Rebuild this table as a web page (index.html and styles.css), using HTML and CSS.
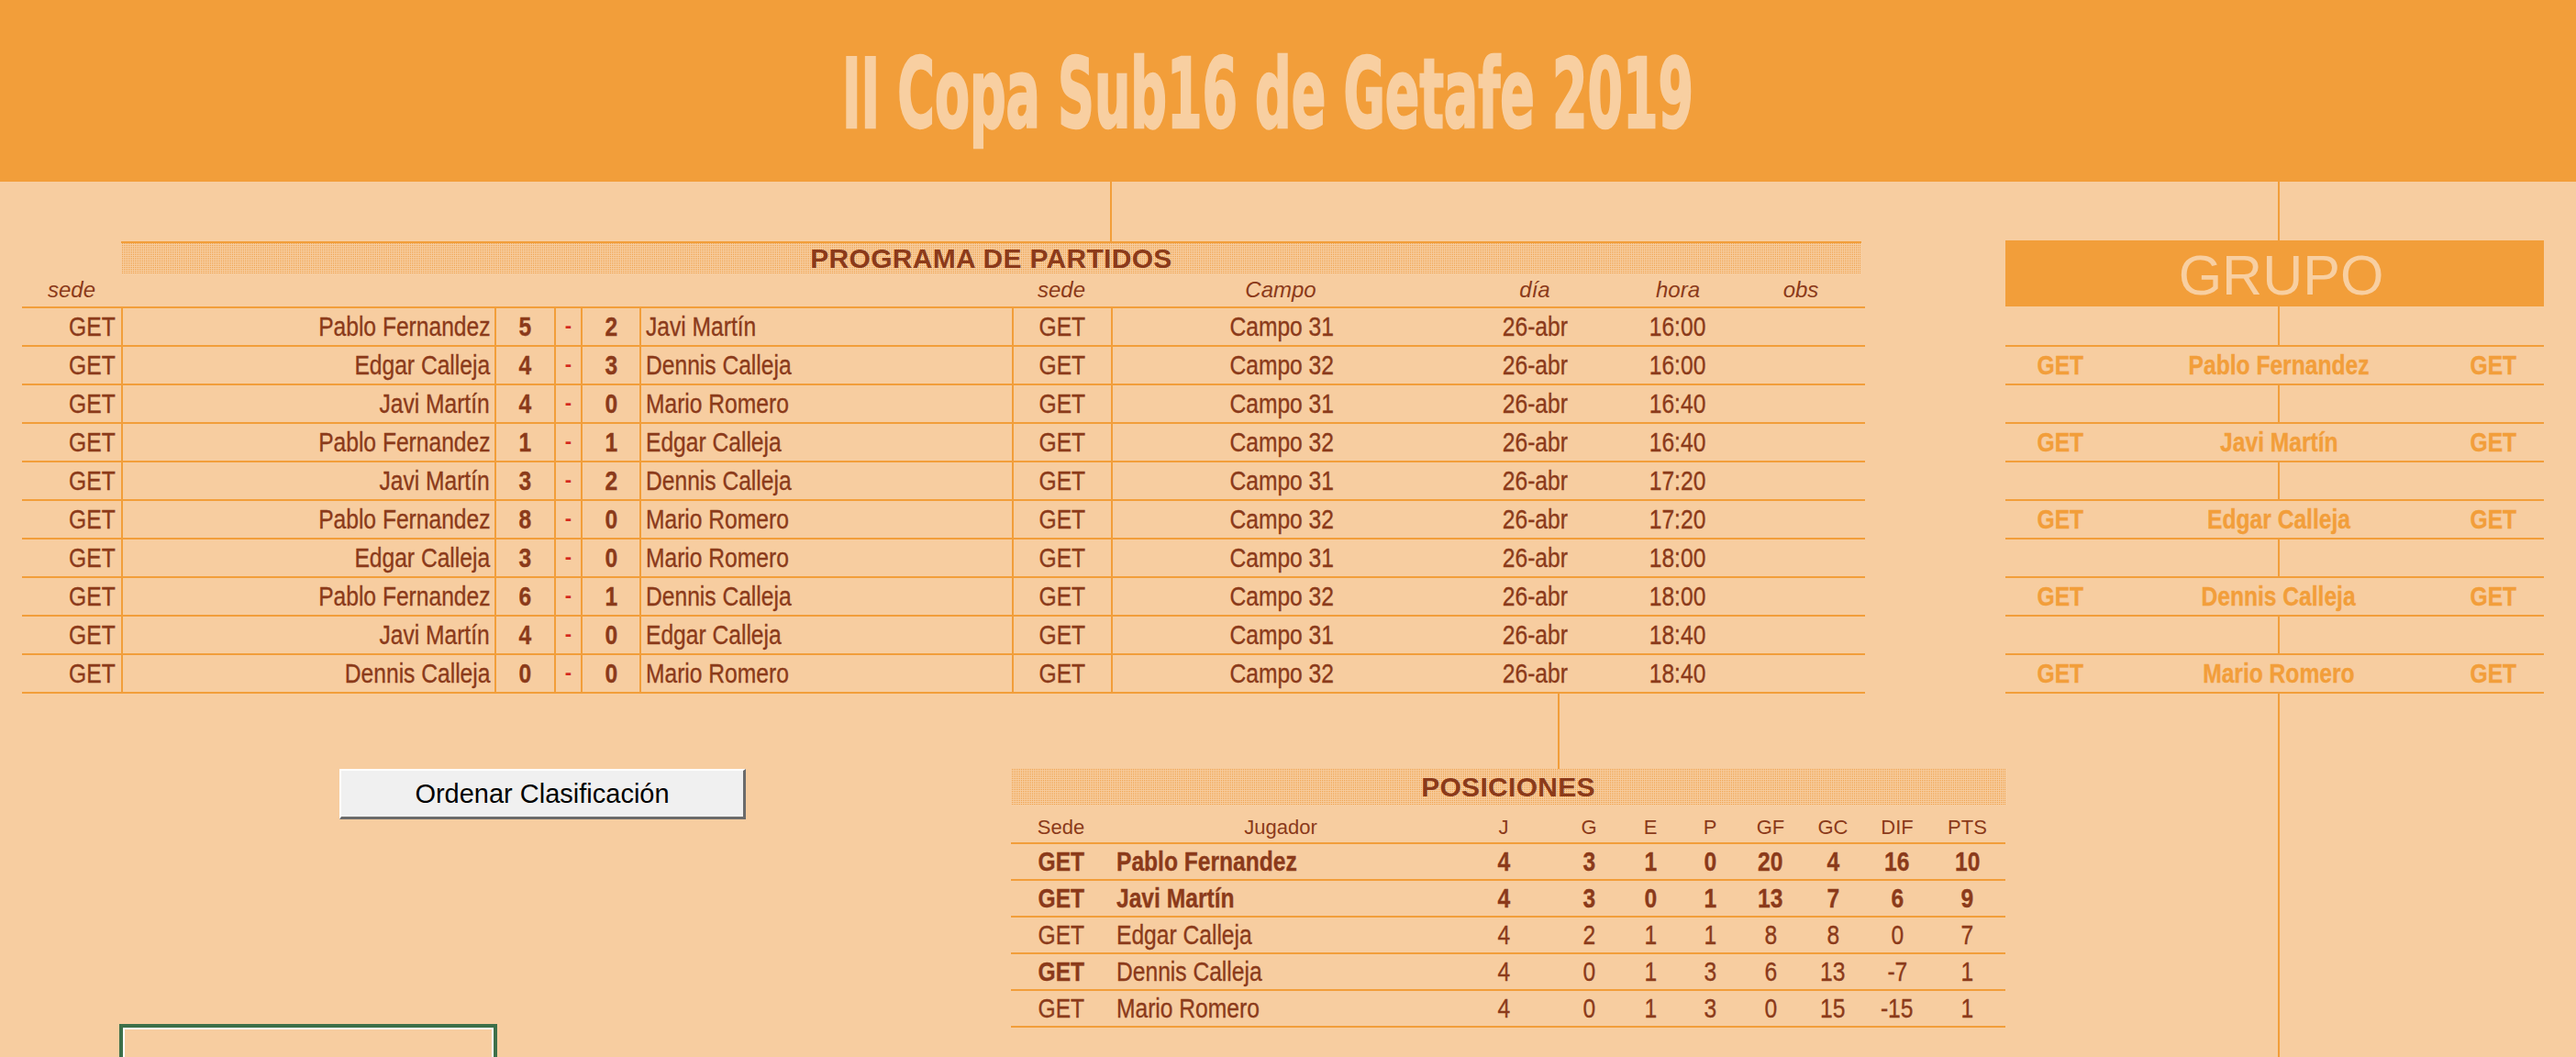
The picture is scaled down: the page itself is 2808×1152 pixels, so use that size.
FILE: index.html
```html
<!DOCTYPE html>
<html lang="es">
<head>
<meta charset="utf-8">
<title>II Copa Sub16 de Getafe 2019</title>
<link rel="stylesheet" href="styles.css">
</head>
<body>
<header class="banner">
  <h1 class="title"><span class="title-text">II Copa Sub16 de Getafe 2019</span></h1>
</header>
<main class="sheet">
  <div class="left">
    <div class="gap-top"><div class="vline vline-campo"></div></div>
    <section class="programa">
      <div class="bar bar-programa">PROGRAMA DE PARTIDOS</div>
      <div class="prog">
        <div class="prow prow-head">
          <span class="c">sede</span><span></span><span></span><span></span><span></span><span></span><span class="c">sede</span><span class="c">Campo</span><span class="c">día</span><span class="c">hora</span><span class="c">obs</span>
        </div>
        <div class="prow prow-body">
          <span class="sede"><span class="n">GET</span></span><span class="home"><span class="n">Pablo Fernandez</span></span><span class="score"><span class="n">5</span></span><span class="dash">-</span><span class="score"><span class="n">2</span></span><span class="away"><span class="n">Javi Martín</span></span><span class="c"><span class="n">GET</span></span><span class="c"><span class="n">Campo 31</span></span><span class="c"><span class="n">26-abr</span></span><span class="c"><span class="n">16:00</span></span><span class="c"></span>
        </div>
        <div class="prow prow-body">
          <span class="sede"><span class="n">GET</span></span><span class="home"><span class="n">Edgar Calleja</span></span><span class="score"><span class="n">4</span></span><span class="dash">-</span><span class="score"><span class="n">3</span></span><span class="away"><span class="n">Dennis Calleja</span></span><span class="c"><span class="n">GET</span></span><span class="c"><span class="n">Campo 32</span></span><span class="c"><span class="n">26-abr</span></span><span class="c"><span class="n">16:00</span></span><span class="c"></span>
        </div>
        <div class="prow prow-body">
          <span class="sede"><span class="n">GET</span></span><span class="home"><span class="n">Javi Martín</span></span><span class="score"><span class="n">4</span></span><span class="dash">-</span><span class="score"><span class="n">0</span></span><span class="away"><span class="n">Mario Romero</span></span><span class="c"><span class="n">GET</span></span><span class="c"><span class="n">Campo 31</span></span><span class="c"><span class="n">26-abr</span></span><span class="c"><span class="n">16:40</span></span><span class="c"></span>
        </div>
        <div class="prow prow-body">
          <span class="sede"><span class="n">GET</span></span><span class="home"><span class="n">Pablo Fernandez</span></span><span class="score"><span class="n">1</span></span><span class="dash">-</span><span class="score"><span class="n">1</span></span><span class="away"><span class="n">Edgar Calleja</span></span><span class="c"><span class="n">GET</span></span><span class="c"><span class="n">Campo 32</span></span><span class="c"><span class="n">26-abr</span></span><span class="c"><span class="n">16:40</span></span><span class="c"></span>
        </div>
        <div class="prow prow-body">
          <span class="sede"><span class="n">GET</span></span><span class="home"><span class="n">Javi Martín</span></span><span class="score"><span class="n">3</span></span><span class="dash">-</span><span class="score"><span class="n">2</span></span><span class="away"><span class="n">Dennis Calleja</span></span><span class="c"><span class="n">GET</span></span><span class="c"><span class="n">Campo 31</span></span><span class="c"><span class="n">26-abr</span></span><span class="c"><span class="n">17:20</span></span><span class="c"></span>
        </div>
        <div class="prow prow-body">
          <span class="sede"><span class="n">GET</span></span><span class="home"><span class="n">Pablo Fernandez</span></span><span class="score"><span class="n">8</span></span><span class="dash">-</span><span class="score"><span class="n">0</span></span><span class="away"><span class="n">Mario Romero</span></span><span class="c"><span class="n">GET</span></span><span class="c"><span class="n">Campo 32</span></span><span class="c"><span class="n">26-abr</span></span><span class="c"><span class="n">17:20</span></span><span class="c"></span>
        </div>
        <div class="prow prow-body">
          <span class="sede"><span class="n">GET</span></span><span class="home"><span class="n">Edgar Calleja</span></span><span class="score"><span class="n">3</span></span><span class="dash">-</span><span class="score"><span class="n">0</span></span><span class="away"><span class="n">Mario Romero</span></span><span class="c"><span class="n">GET</span></span><span class="c"><span class="n">Campo 31</span></span><span class="c"><span class="n">26-abr</span></span><span class="c"><span class="n">18:00</span></span><span class="c"></span>
        </div>
        <div class="prow prow-body">
          <span class="sede"><span class="n">GET</span></span><span class="home"><span class="n">Pablo Fernandez</span></span><span class="score"><span class="n">6</span></span><span class="dash">-</span><span class="score"><span class="n">1</span></span><span class="away"><span class="n">Dennis Calleja</span></span><span class="c"><span class="n">GET</span></span><span class="c"><span class="n">Campo 32</span></span><span class="c"><span class="n">26-abr</span></span><span class="c"><span class="n">18:00</span></span><span class="c"></span>
        </div>
        <div class="prow prow-body">
          <span class="sede"><span class="n">GET</span></span><span class="home"><span class="n">Javi Martín</span></span><span class="score"><span class="n">4</span></span><span class="dash">-</span><span class="score"><span class="n">0</span></span><span class="away"><span class="n">Edgar Calleja</span></span><span class="c"><span class="n">GET</span></span><span class="c"><span class="n">Campo 31</span></span><span class="c"><span class="n">26-abr</span></span><span class="c"><span class="n">18:40</span></span><span class="c"></span>
        </div>
        <div class="prow prow-body">
          <span class="sede"><span class="n">GET</span></span><span class="home"><span class="n">Dennis Calleja</span></span><span class="score"><span class="n">0</span></span><span class="dash">-</span><span class="score"><span class="n">0</span></span><span class="away"><span class="n">Mario Romero</span></span><span class="c"><span class="n">GET</span></span><span class="c"><span class="n">Campo 32</span></span><span class="c"><span class="n">26-abr</span></span><span class="c"><span class="n">18:40</span></span><span class="c"></span>
        </div>
      </div>
    </section>
    <div class="lower">
      <div class="lower-left">
        <button class="btn" type="button">Ordenar Clasificación</button>
        <div class="selbox"></div>
      </div>
      <section class="lower-right">
        <div class="gap-mid"><div class="vline vline-j"></div></div>
        <div class="bar bar-pos">POSICIONES</div>
        <div class="pos">
          <div class="qrow qrow-head">
            <span>Sede</span><span>Jugador</span><span>J</span><span>G</span><span>E</span><span>P</span><span>GF</span><span>GC</span><span>DIF</span><span>PTS</span>
          </div>
          <div class="qrow qrow-bold">
            <span class="b"><span class="n">GET</span></span><span class="name"><span class="n">Pablo Fernandez</span></span><span><span class="n">4</span></span><span><span class="n">3</span></span><span><span class="n">1</span></span><span><span class="n">0</span></span><span><span class="n">20</span></span><span><span class="n">4</span></span><span><span class="n">16</span></span><span><span class="n">10</span></span>
          </div>
          <div class="qrow qrow-bold">
            <span class="b"><span class="n">GET</span></span><span class="name"><span class="n">Javi Martín</span></span><span><span class="n">4</span></span><span><span class="n">3</span></span><span><span class="n">0</span></span><span><span class="n">1</span></span><span><span class="n">13</span></span><span><span class="n">7</span></span><span><span class="n">6</span></span><span><span class="n">9</span></span>
          </div>
          <div class="qrow">
            <span><span class="n">GET</span></span><span class="name"><span class="n">Edgar Calleja</span></span><span><span class="n">4</span></span><span><span class="n">2</span></span><span><span class="n">1</span></span><span><span class="n">1</span></span><span><span class="n">8</span></span><span><span class="n">8</span></span><span><span class="n">0</span></span><span><span class="n">7</span></span>
          </div>
          <div class="qrow">
            <span class="b"><span class="n">GET</span></span><span class="name"><span class="n">Dennis Calleja</span></span><span><span class="n">4</span></span><span><span class="n">0</span></span><span><span class="n">1</span></span><span><span class="n">3</span></span><span><span class="n">6</span></span><span><span class="n">13</span></span><span><span class="n">-7</span></span><span><span class="n">1</span></span>
          </div>
          <div class="qrow">
            <span><span class="n">GET</span></span><span class="name"><span class="n">Mario Romero</span></span><span><span class="n">4</span></span><span><span class="n">0</span></span><span><span class="n">1</span></span><span><span class="n">3</span></span><span><span class="n">0</span></span><span><span class="n">15</span></span><span><span class="n">-15</span></span><span><span class="n">1</span></span>
          </div>
        </div>
      </section>
    </div>
  </div>
  <aside class="right">
    <div class="gap-top-r"><div class="vline vline-grupo"></div></div>
    <div class="grupo">GRUPO</div>
    <div class="gblank gblank-first"><span></span><span></span></div>
    <div class="grow"><span><span class="n">GET</span></span><span><span class="n">Pablo Fernandez</span></span><span><span class="n">GET</span></span></div>
    <div class="gblank"><span></span><span></span></div>
    <div class="grow"><span><span class="n">GET</span></span><span><span class="n">Javi Martín</span></span><span><span class="n">GET</span></span></div>
    <div class="gblank"><span></span><span></span></div>
    <div class="grow"><span><span class="n">GET</span></span><span><span class="n">Edgar Calleja</span></span><span><span class="n">GET</span></span></div>
    <div class="gblank"><span></span><span></span></div>
    <div class="grow"><span><span class="n">GET</span></span><span><span class="n">Dennis Calleja</span></span><span><span class="n">GET</span></span></div>
    <div class="gblank"><span></span><span></span></div>
    <div class="grow"><span><span class="n">GET</span></span><span><span class="n">Mario Romero</span></span><span><span class="n">GET</span></span></div>
    <div class="gfill"><div class="vline vline-grupo"></div></div>
  </aside>
</main>
</body>
</html>
```

FILE: styles.css
```css
* { box-sizing: border-box; margin: 0; padding: 0; }
html, body { width: 2808px; height: 1152px; overflow: hidden; }
body {
  background: #F7CDA0;
  font-family: "Liberation Sans", Arial, sans-serif;
  color: #8B3A1A;
}

/* header */
.banner {
  height: 198px;
  background: #F29E3A;
  display: flex;
  justify-content: center;
  padding-top: 50px;
  padding-right: 45px;
}
.title {
  font-family: "DejaVu Sans Condensed", "DejaVu Sans", sans-serif;
  font-weight: 700;
  font-size: 106px;
  line-height: 106px;
  color: #F8CFA1;
  white-space: nowrap;
}
.title-text {
  display: inline-block;
  transform: scaleX(.58);
  -webkit-text-stroke: 2.5px #F8CFA1;
}

/* sheet */
.sheet { display: flex; height: 954px; overflow: hidden; }
.left { width: 2186px; display: flex; flex-direction: column; flex-shrink: 0; }
.left > *, .right > *, .lower-left > *, .lower-right > * { flex-shrink: 0; }
.gap-top { height: 65px; }
.vline { height: 100%; border-left: 2px solid #F29E3A; }
.vline-campo { margin-left: 1210px; }

.bar {
  background-color: #F7CDA0;
  background-image: repeating-conic-gradient(#EE9E45 0 25%, transparent 0 100%);
  background-size: 2px 2px;
  font-weight: 700;
  font-size: 30px;
  letter-spacing: .3px;
  text-align: center;
  color: #8B3A1A;
}
.bar-programa {
  margin-left: 132px;
  width: 1897px;
  height: 35px;
  border-top: 2px solid #F29E3A;
  line-height: 33px;
}

/* narrow (Arial Narrow-like) data text */
.n {
  display: inline-block;
  transform: scaleX(.82);
  -webkit-text-stroke: .35px currentColor;
}
.sede .n, .home .n { transform-origin: right center; }
.away .n, .name .n { transform-origin: left center; }

/* programa */
.prog { margin-left: 24px; width: 2009px; }
.prow {
  display: grid;
  grid-template-columns: 108px 407px 65px 29px 64px 406px 108px 370px 184px 128px 140px;
  height: 42px;
  border-bottom: 2px solid #F29E3A;
  font-size: 30px;
  line-height: 40px;
  white-space: nowrap;
}
.prow-head { height: 38px; font-size: 24px; font-style: italic; line-height: 36px; }
.prow-body > span:nth-child(n+2):nth-child(-n+8) { border-left: 2px solid #F29E3A; }
.c { text-align: center; }
.sede { text-align: right; padding-right: 6px; }
.home { text-align: right; padding-right: 5px; }
.away { text-align: left; padding-left: 5px; }
.score { text-align: center; font-weight: 700; }
.dash { text-align: center; font-weight: 700; font-size: 22px; line-height: 38px; color: #D42A1E; }

/* lower part */
.lower { display: flex; flex: 1 0 auto; }
.lower-left { width: 1102px; display: flex; flex-direction: column; }
.btn {
  margin: 82px 0 0 370px;
  width: 443px;
  height: 55px;
  background: #F0F0F0;
  border-style: solid;
  border-width: 2px 3px 3px 2px;
  border-color: #FFFFFF #6B6B6B #6B6B6B #FFFFFF;
  font-family: "Liberation Sans", Arial, sans-serif;
  font-size: 29px;
  color: #000;
}
.selbox {
  margin: 223px 0 0 130px;
  width: 412px;
  height: 60px;
  border: 4px solid #3D7049;
  box-shadow: inset 0 0 0 2px #FFFFFF;
}
.lower-right { width: 1084px; display: flex; flex-direction: column; }
.gap-mid { height: 82px; }
.vline-j { margin-left: 596px; }
.bar-pos { height: 39px; line-height: 39px; }

.qrow {
  display: grid;
  grid-template-columns: 109px 370px 116px 70px 64px 66px 66px 70px 70px 83px;
  height: 40px;
  border-bottom: 2px solid #F29E3A;
  font-size: 30px;
  line-height: 38px;
  text-align: center;
  white-space: nowrap;
}
.qrow-head { height: 43px; font-size: 22px; line-height: 32px; padding-top: 9px; }
.qrow-bold { font-weight: 700; }
.b { font-weight: 700; }
.name { text-align: left; padding-left: 6px; }

/* grupo */
.right { width: 622px; display: flex; flex-direction: column; flex-shrink: 0; }
.gap-top-r { height: 64px; }
.vline-grupo { margin-left: 297px; }
.grupo {
  width: 587px;
  height: 72px;
  background: #F29E3A;
  color: #F8CFA1;
  font-size: 61px;
  line-height: 68px;
  padding-top: 4px;
  padding-left: 14px;
  text-align: center;
}
.gblank {
  width: 587px;
  height: 42px;
  border-bottom: 2px solid #F29E3A;
  display: grid;
  grid-template-columns: 299px 1fr;
}
.gblank-first { height: 44px; }
.gblank > span:first-child { border-right: 2px solid #F29E3A; }
.grow {
  width: 587px;
  height: 42px;
  border-bottom: 2px solid #F29E3A;
  display: grid;
  grid-template-columns: 120px 356px 111px;
  font-size: 30px;
  font-weight: 700;
  line-height: 40px;
  color: #F29E3A;
  text-align: center;
  white-space: nowrap;
}
.gfill { flex: 1 1 auto !important; min-height: 0; }
```
